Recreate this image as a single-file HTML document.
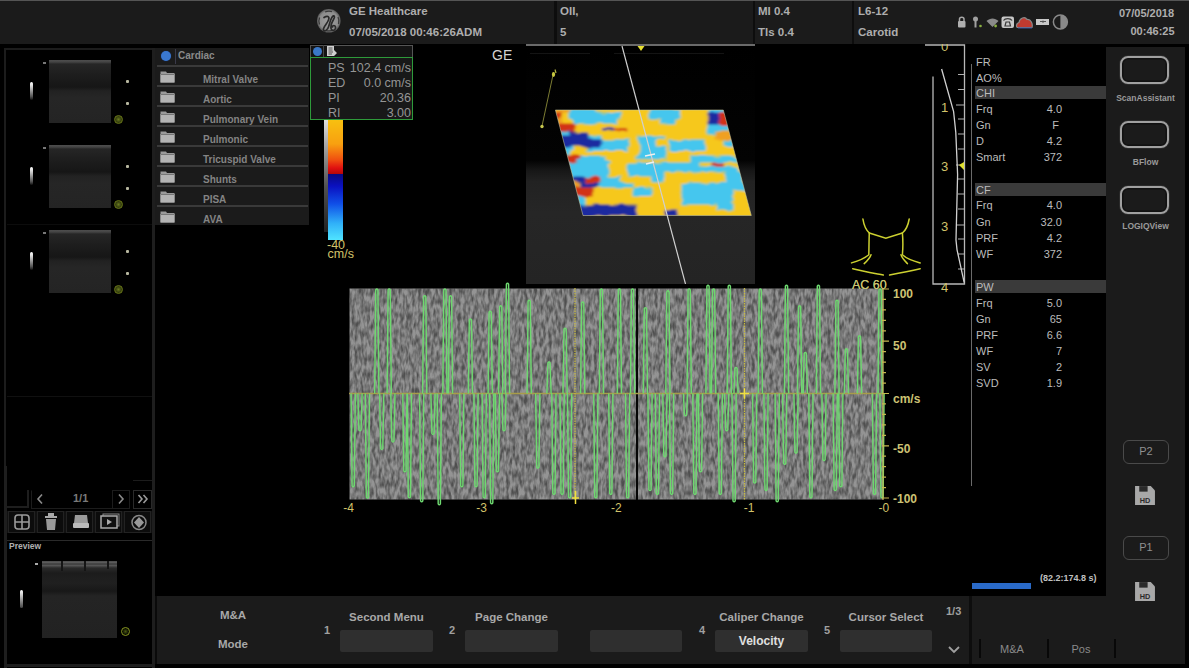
<!DOCTYPE html>
<html><head><meta charset="utf-8">
<style>
*{margin:0;padding:0;box-sizing:border-box}
html,body{width:1189px;height:668px;overflow:hidden;background:#000;font-family:"Liberation Sans",sans-serif}
.a{position:absolute}
.t{position:absolute;white-space:nowrap;line-height:1}
#top{left:0;top:0;width:1189px;height:43.5px;background:#1b1b1b;border-top:1px solid #555}
.tb{font-weight:bold;font-size:11.5px;color:#aeaeae}
.fold{font-weight:bold;font-size:10px;color:#848484}
.rowline{position:absolute;left:157px;width:151px;height:2px;background:#3a3a3a}
.prm{font-size:11px;color:#bcbcbc}
.hdr{position:absolute;left:975px;width:131px;height:13px;background:#3a3a3a}
.yl{color:#d2c36a}
.btnlbl{font-weight:bold;font-size:11.5px;color:#a8a8a8}
.sbtn{position:absolute;height:22.5px;width:93px;background:#2f2f2f;border-radius:2px}
.num{font-weight:bold;font-size:11px;color:#a0a0a0}
</style></head><body>


<!-- TOP BAR -->
<div id="top" class="a"></div>
<div class="a" style="left:554px;top:1px;width:3px;height:43px;background:#0d0d0d"></div>
<div class="a" style="left:753px;top:1px;width:2px;height:43px;background:#0d0d0d"></div>
<div class="a" style="left:852px;top:1px;width:2px;height:43px;background:#0d0d0d"></div>
<div class="a" style="left:526px;top:44px;width:229px;height:2px;background:#6a6a6a"></div>
<!-- GE logo -->
<svg class="a" style="left:312px;top:4px" width="34" height="34" viewBox="0 0 34 34">
 <defs><radialGradient id="gel" cx="50%" cy="50%" r="50%"><stop offset="0" stop-color="#a0a0a0"/><stop offset="0.8" stop-color="#8c8c8c"/><stop offset="1" stop-color="#5a5a5a"/></radialGradient></defs>
 <circle cx="16.8" cy="16.8" r="11.8" fill="url(#gel)"/>
 <path d="M13 8 A9.5 9.5 0 0 1 20 7.6 M26 13 A9.5 9.5 0 0 1 26.5 20 M21 26 A9.5 9.5 0 0 1 14 26.3 M7.5 20.5 A9.5 9.5 0 0 1 7.6 13.5" fill="none" stroke="#3a3a3a" stroke-width="1.3"/>
 <path d="M12 13.5 C15 11.5 18 12 16.5 16 C15 20 10.5 23.5 11.5 26 C12.5 28 15.5 26 16.5 23 C17.5 20 18.5 15 20.5 12.5 C22 11 23.5 12 21.5 15.5 C19.5 19 18 23 19.5 25.5 C21 27.5 24 26 23.5 23 C23 21 20.5 21 20.5 23" fill="none" stroke="#2a2a2a" stroke-width="1.7" stroke-linecap="round"/>
</svg>
<div class="t tb" style="left:349px;top:6px">GE Healthcare</div>
<div class="t tb" style="left:349px;top:27px">07/05/2018 00:46:26ADM</div>
<div class="t tb" style="left:560px;top:6px">OII,</div>
<div class="t tb" style="left:560px;top:27px">5</div>
<div class="t tb" style="left:758px;top:6px">MI 0.4</div>
<div class="t tb" style="left:758px;top:27px">Tls 0.4</div>
<div class="t tb" style="left:858px;top:6px">L6-12</div>
<div class="t tb" style="left:858px;top:27px">Carotid</div>
<svg class="a" style="left:955px;top:12px" width="118" height="20" viewBox="955 12 118 20">
 <path d="M959.5 21.5V19C959.5 16.5 964 16.5 964 19V21.5" fill="none" stroke="#a8a8a8" stroke-width="1.5"/>
 <rect x="958" y="21" width="7.5" height="6.5" rx="1" fill="#b0b0b0"/>
 <circle cx="975.5" cy="19" r="2.5" fill="#a0a0a0"/><rect x="974.5" y="20" width="2" height="7.5" fill="#a0a0a0"/>
 <circle cx="980.5" cy="26" r="1.3" fill="#8ab040"/>
 <path d="M986.5 21 C990 17.5 995 17.5 998.5 21 L992.5 27 Z" fill="#8a8a8a"/>
 <circle cx="995.6" cy="26" r="1.4" fill="#8ab040"/>
 <rect x="1001.5" y="16.5" width="12.5" height="11.5" rx="2" fill="#c8c8c8"/>
 <path d="M1003.5 20.5 C1005 18 1010.5 18 1012 20.5 M1005 26 L1006 22 H1009.5 L1010.5 26 Z" fill="none" stroke="#3a3a3a" stroke-width="1.2"/>
 <path d="M1017.5 27.5 C1016 27.5 1016 23 1019 22.5 C1019.5 18 1025 16 1027 19.5 C1031 19 1033 24 1032 27.5 Z" fill="#c03a30" stroke="#8a8a8a" stroke-width="1.2"/>
 <path d="M1018 28H1032" stroke="#3a50a0" stroke-width="1"/>
 <path d="M1036 19H1049V25H1036Z" fill="#c8c8c8"/><path d="M1040 21.5H1046M1043 20.5V23" stroke="#555" stroke-width="1"/>
 <circle cx="1060.4" cy="22" r="7" fill="none" stroke="#8a8a8a" stroke-width="1.5"/>
 <path d="M1060.4 15 A7 7 0 0 1 1060.4 29 Z" fill="#8a8a8a"/>
</svg>
<div class="t tb" style="left:1119px;top:8px;font-size:11px">07/05/2018</div>
<div class="t tb" style="left:1130.5px;top:26px;font-size:11px">00:46:25</div>

<!-- LEFT PANEL -->
<div class="a" style="left:4px;top:48px;width:151px;height:418px;border:2px solid #1c1c1c;border-right:none;border-bottom:none"></div>
<div class="a" style="left:152px;top:48px;width:3px;height:620px;background:#1e1e1e"></div>
<div class="a" style="left:7px;top:224px;width:145px;height:1px;background:#0c0c0c"></div>
<div class="a" style="left:7px;top:396px;width:145px;height:1px;background:#101010"></div>
<div class="a" style="left:49px;top:60px;width:62px;height:63px;background:linear-gradient(#4e4e4e 0,#444 2px,#262626 4px,#1e1e1e 14px,#161616 27px,#222 31px,#262626 60%,#242424 100%)"></div>
<div class="a" style="left:29.5px;top:82px;width:3.5px;height:18px;border-radius:2px;background:linear-gradient(#fff 0,#ddd 20%,#555 80%,#111)"></div>
<div class="a" style="left:43px;top:62px;width:3px;height:2px;background:#777"></div>
<div class="a" style="left:126px;top:80px;width:2.5px;height:2.5px;border-radius:1px;background:#b8b8a0"></div>
<div class="a" style="left:126px;top:102px;width:2.5px;height:2.5px;border-radius:1px;background:#b8b8a0"></div>
<div class="a" style="left:113.5px;top:114.5px;width:9px;height:9px;border-radius:50%;border:1.3px solid #6a7818;background:radial-gradient(#6a7a20 0,#3a4410 50%,#222a08 100%)"></div>
<div class="a" style="left:49px;top:145px;width:62px;height:63px;background:linear-gradient(#4e4e4e 0,#444 2px,#262626 4px,#1e1e1e 14px,#161616 27px,#222 31px,#262626 60%,#242424 100%)"></div>
<div class="a" style="left:29.5px;top:167px;width:3.5px;height:18px;border-radius:2px;background:linear-gradient(#fff 0,#ddd 20%,#555 80%,#111)"></div>
<div class="a" style="left:43px;top:147px;width:3px;height:2px;background:#777"></div>
<div class="a" style="left:126px;top:165px;width:2.5px;height:2.5px;border-radius:1px;background:#b8b8a0"></div>
<div class="a" style="left:126px;top:187px;width:2.5px;height:2.5px;border-radius:1px;background:#b8b8a0"></div>
<div class="a" style="left:113.5px;top:199.5px;width:9px;height:9px;border-radius:50%;border:1.3px solid #6a7818;background:radial-gradient(#6a7a20 0,#3a4410 50%,#222a08 100%)"></div>
<div class="a" style="left:49px;top:230px;width:62px;height:63px;background:linear-gradient(#4e4e4e 0,#444 2px,#262626 4px,#1e1e1e 14px,#161616 27px,#222 31px,#262626 60%,#242424 100%)"></div>
<div class="a" style="left:29.5px;top:252px;width:3.5px;height:18px;border-radius:2px;background:linear-gradient(#fff 0,#ddd 20%,#555 80%,#111)"></div>
<div class="a" style="left:43px;top:232px;width:3px;height:2px;background:#777"></div>
<div class="a" style="left:126px;top:250px;width:2.5px;height:2.5px;border-radius:1px;background:#b8b8a0"></div>
<div class="a" style="left:126px;top:272px;width:2.5px;height:2.5px;border-radius:1px;background:#b8b8a0"></div>
<div class="a" style="left:113.5px;top:284.5px;width:9px;height:9px;border-radius:50%;border:1.3px solid #6a7818;background:radial-gradient(#6a7a20 0,#3a4410 50%,#222a08 100%)"></div>

<!-- nav row -->
<div class="a" style="left:7px;top:490px;width:22px;height:18px;border-right:2px solid #1e1e1e;border-bottom:2px solid #1e1e1e"></div>
<div class="a" style="left:31px;top:490px;width:99px;height:19px;border:1.5px solid #1c1c1c;border-top-color:#000"></div>
<svg class="a" style="left:35px;top:492px" width="10" height="14"><path d="M7 2.5L3 7L7 11.5" fill="none" stroke="#8a8a8a" stroke-width="1.6"/></svg>
<div class="t" style="left:73px;top:493px;font-size:11px;color:#7a7a7a;font-weight:bold">1/1</div>
<div class="a" style="left:112px;top:490px;width:18px;height:19px;border:1.5px solid #1c1c1c"></div>
<svg class="a" style="left:116px;top:492px" width="10" height="14"><path d="M3 2.5L7 7L3 11.5" fill="none" stroke="#8a8a8a" stroke-width="1.6"/></svg>
<div class="a" style="left:133px;top:490px;width:19px;height:19px;border:1.5px solid #2a2a2a"></div>
<svg class="a" style="left:136px;top:492px" width="14" height="14"><path d="M2.5 3L6 7L2.5 11M7.5 3L11 7L7.5 11" fill="none" stroke="#9a9a9a" stroke-width="1.6"/></svg>
<div class="a" style="left:133px;top:480px;width:19px;height:1px;background:#1c1c1c"></div>
<!-- icon row -->
<div class="a" style="left:7px;top:511px;width:145px;height:22px;background:#111"></div>
<div class="a" style="left:8px;top:511px;width:27px;height:22px;border:1px solid #222;background:#0c0c0c"></div>
<div class="a" style="left:37px;top:511px;width:27px;height:22px;border:1px solid #222;background:#0c0c0c"></div>
<div class="a" style="left:66px;top:511px;width:27px;height:22px;border:1px solid #222;background:#0c0c0c"></div>
<div class="a" style="left:95px;top:511px;width:27px;height:22px;border:1px solid #222;background:#0c0c0c"></div>
<div class="a" style="left:124px;top:511px;width:27px;height:22px;border:1px solid #222;background:#0c0c0c"></div>

<svg class="a" style="left:13px;top:514px" width="18" height="16"><rect x="2" y="1" width="14" height="14" rx="3" fill="none" stroke="#9a9a9a" stroke-width="1.6"/><path d="M9 1V15M2 8H16" stroke="#9a9a9a" stroke-width="1.6"/></svg>
<svg class="a" style="left:44px;top:513px" width="14" height="18"><rect x="4" y="0" width="6" height="3" fill="#aaa"/><rect x="1" y="3" width="12" height="2" fill="#aaa"/><path d="M2 6H12L11 17H3Z" fill="#9a9a9a"/></svg>
<svg class="a" style="left:72px;top:514px" width="18" height="16"><path d="M3 1H15L16 9H2Z" fill="#9a9a9a"/><rect x="1" y="9" width="16" height="5" rx="1" fill="#bbb"/></svg>
<svg class="a" style="left:100px;top:513px" width="20" height="17"><rect x="3" y="1" width="16" height="12" fill="none" stroke="#888" stroke-width="1"/><rect x="1" y="3" width="16" height="12" fill="#111" stroke="#aaa" stroke-width="1.5"/><path d="M7 6L12 9L7 12Z" fill="#aaa"/></svg>
<svg class="a" style="left:130px;top:514px" width="18" height="17"><circle cx="9" cy="8.5" r="7" fill="none" stroke="#888" stroke-width="1.5"/><path d="M9 3L14 8.5L9 14L4 8.5Z" fill="#999"/></svg>
<div class="a" style="left:7px;top:540px;width:145px;height:1px;background:#2a2a2a"></div>
<div class="t" style="left:9px;top:542px;font-size:8.5px;font-weight:bold;color:#b0b0b0">Preview</div>
<!-- preview image -->
<div class="a" style="left:42px;top:561px;width:75px;height:77px;background:linear-gradient(#4a4a4a 0,#5a5a5a 1.5px,#3a3a3a 3px,#555 4.5px,#2a2a2a 7px,#1c1c1c 12px,#202020 22px,#181818 30px,#242424 35px,#222 100%)"></div>
<div class="a" style="left:61px;top:561px;width:2px;height:10px;background:#151515"></div>
<div class="a" style="left:84px;top:561px;width:2px;height:10px;background:#151515"></div>
<div class="a" style="left:107px;top:561px;width:2px;height:8px;background:#151515"></div>
<div class="a" style="left:20px;top:590px;width:3px;height:18px;border-radius:2px;background:linear-gradient(#fff,#444)"></div>
<div class="a" style="left:35px;top:563px;width:3px;height:2px;background:#aaa"></div>
<div class="a" style="left:121px;top:627px;width:9px;height:9px;border-radius:50%;border:1.2px solid #8a9a20;background:radial-gradient(#4a5a10,transparent 70%)"></div>
<div class="a" style="left:4px;top:466px;width:3px;height:202px;background:#1e1e1e"></div>
<div class="a" style="left:4px;top:664px;width:151px;height:3px;background:#1e1e1e"></div>

<!-- FOLDER LIST -->
<div class="a" style="left:155px;top:48px;width:154px;height:177px;background:#1b1b1b"></div>
<div class="a" style="left:161px;top:51px;width:10px;height:10px;border-radius:50%;background:#3a78d0;box-shadow:0 0 1px #1a3a80"></div>
<div class="a" style="left:175px;top:49px;width:1px;height:15px;background:#3a3a4a"></div>
<div class="t" style="left:178px;top:51px;font-size:10px;font-weight:bold;color:#8a8a8a">Cardiac</div>
<div class="rowline" style="top:65px"></div>
<svg class="a" style="left:160px;top:70px" width="15" height="13"><path d="M0.5 1.5H6L7 3H14.5V12.5H0.5Z" fill="#9a9a9a"/><rect x="0.5" y="4" width="14" height="8.5" fill="#b4b4b4"/><path d="M1 4.5H14" stroke="#777" stroke-width="1"/></svg>
<div class="t fold" style="left:203px;top:75px">Mitral Valve</div>
<div class="rowline" style="top:85px"></div>
<svg class="a" style="left:160px;top:90px" width="15" height="13"><path d="M0.5 1.5H6L7 3H14.5V12.5H0.5Z" fill="#9a9a9a"/><rect x="0.5" y="4" width="14" height="8.5" fill="#b4b4b4"/><path d="M1 4.5H14" stroke="#777" stroke-width="1"/></svg>
<div class="t fold" style="left:203px;top:95px">Aortic</div>
<div class="rowline" style="top:105px"></div>
<svg class="a" style="left:160px;top:110px" width="15" height="13"><path d="M0.5 1.5H6L7 3H14.5V12.5H0.5Z" fill="#9a9a9a"/><rect x="0.5" y="4" width="14" height="8.5" fill="#b4b4b4"/><path d="M1 4.5H14" stroke="#777" stroke-width="1"/></svg>
<div class="t fold" style="left:203px;top:115px">Pulmonary Vein</div>
<div class="rowline" style="top:125px"></div>
<svg class="a" style="left:160px;top:130px" width="15" height="13"><path d="M0.5 1.5H6L7 3H14.5V12.5H0.5Z" fill="#9a9a9a"/><rect x="0.5" y="4" width="14" height="8.5" fill="#b4b4b4"/><path d="M1 4.5H14" stroke="#777" stroke-width="1"/></svg>
<div class="t fold" style="left:203px;top:135px">Pulmonic</div>
<div class="rowline" style="top:145px"></div>
<svg class="a" style="left:160px;top:150px" width="15" height="13"><path d="M0.5 1.5H6L7 3H14.5V12.5H0.5Z" fill="#9a9a9a"/><rect x="0.5" y="4" width="14" height="8.5" fill="#b4b4b4"/><path d="M1 4.5H14" stroke="#777" stroke-width="1"/></svg>
<div class="t fold" style="left:203px;top:155px">Tricuspid Valve</div>
<div class="rowline" style="top:165px"></div>
<svg class="a" style="left:160px;top:170px" width="15" height="13"><path d="M0.5 1.5H6L7 3H14.5V12.5H0.5Z" fill="#9a9a9a"/><rect x="0.5" y="4" width="14" height="8.5" fill="#b4b4b4"/><path d="M1 4.5H14" stroke="#777" stroke-width="1"/></svg>
<div class="t fold" style="left:203px;top:175px">Shunts</div>
<div class="rowline" style="top:185px"></div>
<svg class="a" style="left:160px;top:190px" width="15" height="13"><path d="M0.5 1.5H6L7 3H14.5V12.5H0.5Z" fill="#9a9a9a"/><rect x="0.5" y="4" width="14" height="8.5" fill="#b4b4b4"/><path d="M1 4.5H14" stroke="#777" stroke-width="1"/></svg>
<div class="t fold" style="left:203px;top:195px">PISA</div>
<div class="rowline" style="top:205px"></div>
<svg class="a" style="left:160px;top:210px" width="15" height="13"><path d="M0.5 1.5H6L7 3H14.5V12.5H0.5Z" fill="#9a9a9a"/><rect x="0.5" y="4" width="14" height="8.5" fill="#b4b4b4"/><path d="M1 4.5H14" stroke="#777" stroke-width="1"/></svg>
<div class="t fold" style="left:203px;top:215px">AVA</div>

<!-- PS BOX -->
<div class="a" style="left:310px;top:45px;width:103px;height:13px;border:1px solid #555;border-bottom:none;background:#141414"></div>
<div class="a" style="left:323px;top:45px;width:1px;height:12px;background:#444"></div>
<div class="a" style="left:313px;top:47px;width:9px;height:9px;border-radius:50%;background:#3a78c8"></div>
<svg class="a" style="left:326px;top:45px" width="12" height="12"><path d="M1 1H8V5L11 8L8 11H1Z" fill="#d0d0d0"/><path d="M2.5 3H6.5M2.5 5H6.5M2.5 7H7M2.5 9H6" stroke="#444" stroke-width="0.9"/></svg>
<div class="a" style="left:310px;top:57px;width:103px;height:63px;border:1.5px solid #2e9a3a;background:#181818"></div>
<div class="t" style="left:328px;top:61.5px;font-size:12.5px;color:#959595">PS</div>
<div class="t" style="left:340px;top:61.5px;width:71px;text-align:right;font-size:12.5px;color:#959595">102.4 cm/s</div>
<div class="t" style="left:328px;top:76.5px;font-size:12.5px;color:#959595">ED</div>
<div class="t" style="left:340px;top:76.5px;width:71px;text-align:right;font-size:12.5px;color:#959595">0.0 cm/s</div>
<div class="t" style="left:328px;top:91.5px;font-size:12.5px;color:#959595">PI</div>
<div class="t" style="left:340px;top:91.5px;width:71px;text-align:right;font-size:12.5px;color:#959595">20.36</div>
<div class="t" style="left:328px;top:106.5px;font-size:12.5px;color:#959595">RI</div>
<div class="t" style="left:340px;top:106.5px;width:71px;text-align:right;font-size:12.5px;color:#959595">3.00</div>

<!-- COLOR BAR -->
<div class="a" style="left:324px;top:120px;width:4px;height:112px;background:linear-gradient(#e0e0e0,#a0a0a0 25%,#505050 60%,#202020)"></div>
<div class="a" style="left:328px;top:120px;width:15px;height:120px;background:linear-gradient(#f8c010 0,#f8a010 20%,#f05010 33%,#e01010 40%,#b80808 44.6%,#0a0a80 45.2%,#0a10c0 55%,#1050e8 70%,#30b0f8 86%,#50e4ff 100%)"></div>
<div class="t yl" style="left:327px;top:239px;font-size:12.5px">-40</div>
<div class="t yl" style="left:327.5px;top:248px;font-size:12.5px">cm/s</div>

<!-- BMODE -->
<div class="a" style="left:526px;top:46px;width:229px;height:238px;background:linear-gradient(#000 0,#030303 48%,#161616 52%,#222 57%,#262626 70%,#242424 100%)"></div>
<div class="a" style="left:530px;top:53px;width:60px;height:1px;background:#141414"></div>
<div class="a" style="left:614px;top:53px;width:110px;height:1px;background:#141414"></div>
<svg class="a" style="left:526px;top:46px" width="229" height="238">
 <defs>
  <filter id="bl" x="-10%" y="-10%" width="120%" height="120%"><feTurbulence type="fractalNoise" baseFrequency="0.09 0.12" numOctaves="2" seed="5" result="t"/><feDisplacementMap in="SourceGraphic" in2="t" scale="6" xChannelSelector="R" yChannelSelector="G" result="d"/><feGaussianBlur in="d" stdDeviation="1.8 1.2"/></filter>
  <clipPath id="cp"><path d="M29.4 64 L197.3 64 L225.3 169.5 L57.0 169.5 Z"/></clipPath>
 </defs>
 <g clip-path="url(#cp)"><g filter="url(#bl)"><rect x="0" y="0" width="229" height="238" fill="#f6c81a"/><rect x="23.5" y="62.5" width="21" height="5" fill="#f0a020"/><rect x="43.5" y="62.5" width="27" height="5" fill="#44c6ee"/><rect x="69.5" y="62.5" width="57" height="5" fill="#f6c81a"/><rect x="123.5" y="62.5" width="31" height="5" fill="#44c6ee"/><rect x="153.5" y="62.5" width="29" height="5" fill="#f6c81a"/><rect x="181.5" y="62.5" width="23" height="5" fill="#44c6ee"/><rect x="23.5" y="66.5" width="14" height="7" fill="#d23018"/><rect x="36.5" y="66.5" width="8" height="7" fill="#f6c81a"/><rect x="43.5" y="66.5" width="53" height="7" fill="#44c6ee"/><rect x="95.5" y="66.5" width="29" height="7" fill="#f6c81a"/><rect x="123.5" y="66.5" width="31" height="7" fill="#44c6ee"/><rect x="153.5" y="66.5" width="28" height="7" fill="#f6c81a"/><rect x="180.5" y="66.5" width="14" height="7" fill="#1a2aa0"/><rect x="193.5" y="66.5" width="11" height="7" fill="#d23018"/><rect x="23.5" y="72.5" width="14" height="7" fill="#f0a020"/><rect x="36.5" y="72.5" width="10" height="7" fill="#f6c81a"/><rect x="47.5" y="72.5" width="45" height="7" fill="#44c6ee"/><rect x="91.5" y="72.5" width="44" height="7" fill="#f6c81a"/><rect x="134.5" y="72.5" width="16" height="7" fill="#44c6ee"/><rect x="149.5" y="72.5" width="33" height="7" fill="#f6c81a"/><rect x="181.5" y="72.5" width="13" height="7" fill="#1a2aa0"/><rect x="193.5" y="72.5" width="11" height="7" fill="#d23018"/><rect x="23.5" y="78.5" width="27" height="8" fill="#d23018"/><rect x="49.5" y="78.5" width="27" height="8" fill="#f6c81a"/><rect x="75.5" y="78.5" width="26" height="8" fill="#f6c81a"/><rect x="100.5" y="78.5" width="82" height="8" fill="#f6c81a"/><rect x="181.5" y="78.5" width="23" height="8" fill="#44c6ee"/><rect x="23.5" y="85.5" width="21" height="5" fill="#44c6ee"/><rect x="43.5" y="85.5" width="20" height="5" fill="#1a2aa0"/><rect x="62.5" y="85.5" width="121" height="5" fill="#f6c81a"/><rect x="182.5" y="85.5" width="8" height="5" fill="#44c6ee"/><rect x="189.5" y="85.5" width="20" height="5" fill="#f0a020"/><rect x="23.5" y="89.5" width="40" height="5" fill="#1a2aa0"/><rect x="62.5" y="89.5" width="14" height="5" fill="#44c6ee"/><rect x="75.5" y="89.5" width="37" height="5" fill="#f6c81a"/><rect x="111.5" y="89.5" width="29" height="5" fill="#44c6ee"/><rect x="139.5" y="89.5" width="51" height="5" fill="#f6c81a"/><rect x="189.5" y="89.5" width="20" height="5" fill="#f0a020"/><rect x="23.5" y="93.5" width="52" height="8" fill="#1a2aa0"/><rect x="74.5" y="93.5" width="31" height="8" fill="#44c6ee"/><rect x="104.5" y="93.5" width="10" height="8" fill="#f6c81a"/><rect x="113.5" y="93.5" width="17" height="8" fill="#44c6ee"/><rect x="129.5" y="93.5" width="15" height="8" fill="#f6c81a"/><rect x="143.5" y="93.5" width="37" height="8" fill="#44c6ee"/><rect x="179.5" y="93.5" width="20" height="8" fill="#f6c81a"/><rect x="198.5" y="93.5" width="10" height="8" fill="#44c6ee"/><rect x="207.5" y="93.5" width="17" height="8" fill="#f6c81a"/><rect x="23.5" y="100.5" width="25" height="5.5" fill="#44c6ee"/><rect x="47.5" y="100.5" width="14" height="5.5" fill="#f6c81a"/><rect x="60.5" y="100.5" width="41" height="5.5" fill="#44c6ee"/><rect x="100.5" y="100.5" width="14" height="5.5" fill="#f6c81a"/><rect x="113.5" y="100.5" width="28" height="5.5" fill="#44c6ee"/><rect x="140.5" y="100.5" width="4" height="5.5" fill="#f6c81a"/><rect x="143.5" y="100.5" width="37" height="5.5" fill="#44c6ee"/><rect x="179.5" y="100.5" width="45" height="5.5" fill="#f6c81a"/><rect x="23.5" y="105.0" width="21" height="5.5" fill="#44c6ee"/><rect x="43.5" y="105.0" width="71" height="5.5" fill="#f6c81a"/><rect x="113.5" y="105.0" width="28" height="5.5" fill="#44c6ee"/><rect x="140.5" y="105.0" width="84" height="5.5" fill="#f6c81a"/><rect x="23.5" y="109.5" width="32" height="5" fill="#d23018"/><rect x="54.5" y="109.5" width="25" height="5" fill="#44c6ee"/><rect x="78.5" y="109.5" width="33" height="5" fill="#f6c81a"/><rect x="110.5" y="109.5" width="30" height="5" fill="#44c6ee"/><rect x="139.5" y="109.5" width="27" height="5" fill="#f6c81a"/><rect x="165.5" y="109.5" width="45" height="5" fill="#44c6ee"/><rect x="209.5" y="109.5" width="15" height="5" fill="#f6c81a"/><rect x="23.5" y="113.5" width="28" height="4" fill="#d23018"/><rect x="50.5" y="113.5" width="36" height="4" fill="#44c6ee"/><rect x="85.5" y="113.5" width="80" height="4" fill="#f6c81a"/><rect x="164.5" y="113.5" width="50" height="4" fill="#44c6ee"/><rect x="23.5" y="116.5" width="60" height="5" fill="#44c6ee"/><rect x="82.5" y="116.5" width="20" height="5" fill="#f6c81a"/><rect x="101.5" y="116.5" width="73" height="5" fill="#44c6ee"/><rect x="173.5" y="116.5" width="13" height="5" fill="#f6c81a"/><rect x="185.5" y="116.5" width="13" height="5" fill="#d23018"/><rect x="197.5" y="116.5" width="27" height="5" fill="#f6c81a"/><rect x="23.5" y="120.5" width="60" height="6" fill="#44c6ee"/><rect x="82.5" y="120.5" width="20" height="6" fill="#f6c81a"/><rect x="101.5" y="120.5" width="112" height="6" fill="#44c6ee"/><rect x="212.5" y="120.5" width="17" height="6" fill="#f6c81a"/><rect x="23.5" y="125.5" width="60" height="6" fill="#44c6ee"/><rect x="82.5" y="125.5" width="20" height="6" fill="#f6c81a"/><rect x="101.5" y="125.5" width="37" height="6" fill="#44c6ee"/><rect x="137.5" y="125.5" width="63" height="6" fill="#f6c81a"/><rect x="199.5" y="125.5" width="19" height="6" fill="#44c6ee"/><rect x="217.5" y="125.5" width="12" height="6" fill="#f6c81a"/><rect x="23.5" y="130.5" width="36" height="7" fill="#1a2aa0"/><rect x="58.5" y="130.5" width="16" height="7" fill="#d23018"/><rect x="73.5" y="130.5" width="22" height="7" fill="#44c6ee"/><rect x="94.5" y="130.5" width="32" height="7" fill="#f6c81a"/><rect x="125.5" y="130.5" width="13" height="7" fill="#44c6ee"/><rect x="137.5" y="130.5" width="63" height="7" fill="#f6c81a"/><rect x="199.5" y="130.5" width="19" height="7" fill="#44c6ee"/><rect x="217.5" y="130.5" width="12" height="7" fill="#f6c81a"/><rect x="23.5" y="136.5" width="32" height="6" fill="#f0a020"/><rect x="54.5" y="136.5" width="19" height="6" fill="#1a2aa0"/><rect x="72.5" y="136.5" width="36" height="6" fill="#44c6ee"/><rect x="107.5" y="136.5" width="49" height="6" fill="#f6c81a"/><rect x="155.5" y="136.5" width="74" height="6" fill="#44c6ee"/><rect x="23.5" y="141.5" width="44" height="5" fill="#d23018"/><rect x="66.5" y="141.5" width="42" height="5" fill="#f6c81a"/><rect x="107.5" y="141.5" width="19" height="5" fill="#44c6ee"/><rect x="125.5" y="141.5" width="31" height="5" fill="#f6c81a"/><rect x="155.5" y="141.5" width="74" height="5" fill="#44c6ee"/><rect x="23.5" y="145.5" width="44" height="6" fill="#d23018"/><rect x="66.5" y="145.5" width="42" height="6" fill="#f6c81a"/><rect x="107.5" y="145.5" width="19" height="6" fill="#44c6ee"/><rect x="125.5" y="145.5" width="31" height="6" fill="#f6c81a"/><rect x="155.5" y="145.5" width="52" height="6" fill="#44c6ee"/><rect x="206.5" y="145.5" width="23" height="6" fill="#f6c81a"/><rect x="23.5" y="150.5" width="37" height="9" fill="#44c6ee"/><rect x="59.5" y="150.5" width="97" height="9" fill="#f6c81a"/><rect x="155.5" y="150.5" width="52" height="9" fill="#44c6ee"/><rect x="206.5" y="150.5" width="23" height="9" fill="#f6c81a"/><rect x="23.5" y="158.5" width="88" height="6" fill="#1a2aa0"/><rect x="110.5" y="158.5" width="81" height="6" fill="#f6c81a"/><rect x="190.5" y="158.5" width="19" height="6" fill="#44c6ee"/><rect x="208.5" y="158.5" width="21" height="6" fill="#f6c81a"/><rect x="23.5" y="163.5" width="88" height="7" fill="#1a2aa0"/><rect x="110.5" y="163.5" width="29" height="7" fill="#f6c81a"/><rect x="138.5" y="163.5" width="14" height="7" fill="#1a2aa0"/><rect x="151.5" y="163.5" width="78" height="7" fill="#f6c81a"/><rect x="76" y="82" width="12" height="2.5" fill="#1a2aa0"/><rect x="88" y="82" width="13" height="2.5" fill="#d23018"/><rect x="186" y="118" width="12" height="2.5" fill="#d23018"/></g></g>
 <path d="M29.4 64 L197.3 64 L225.3 169.5 L57.0 169.5 Z" fill="none" stroke="#c8c8a0" stroke-width="1" opacity="0.55"/>
 <path d="M27.0 29.0 L16.0 80.0" stroke="#8a8a38" stroke-width="0.9"/>
 <ellipse cx="27.5" cy="28.5" rx="1.6" ry="2.4" fill="#c8c840"/>
 <path d="M29.0 23.5 L30.0 27.0" stroke="#b0b040" stroke-width="1.2"/>
 <circle cx="16" cy="80.5" r="1.7" fill="#c8c850"/>
 <path d="M96.0 0.0 L159.5 238.0" stroke="#d0d0d0" stroke-width="1.2"/>
 <path d="M111.5 0.0 L118.5 0.0 L115.0 5.0 Z" fill="#e8e030"/>
 <path d="M119.0 110.0 L129.0 108.0 M120.0 118.0 L128.0 116.0" stroke="#f0f0f0" stroke-width="1.3"/>
</svg>
<div class="t" style="left:492px;top:48px;font-size:14px;color:#d4d4d4">GE</div>

<!-- DOPPLER -->
<svg class="a" style="left:349px;top:282px;overflow:visible" width="540" height="220" viewBox="0 -6 540 220">
 <defs>
  <filter id="noise" x="0" y="0" width="100%" height="100%">
   <feTurbulence type="fractalNoise" baseFrequency="0.33 0.12" numOctaves="2" seed="7" result="n"/>
   <feColorMatrix type="matrix" values="0 0 0 0 0  0 0 0 0 0  0 0 0 0 0  0 0 0 -2.2 1.5" in="n" result="a"/>
   <feFlood flood-color="#262626" result="f"/>
   <feComposite in="f" in2="a" operator="in" result="c"/>
   <feGaussianBlur in="c" stdDeviation="0.6"/>
  </filter>
 </defs>
 <rect x="0.5" y="0.5" width="534" height="211" fill="#949494"/>
 <rect x="0.5" y="0.5" width="534" height="211" filter="url(#noise)" opacity="0.62"/>
 <rect x="287" y="0" width="2" height="212" fill="#050505"/>
 <path d="M0 105.5H534" stroke="#a89c48" stroke-width="1.5"/>
 <path d="M25.7 105.5L26.7 1.9Q27.8 -0.1 28.9 1.9L29.9 105.5M38.1 105.5L39.1 1.9Q40.2 -0.1 41.3 1.9L42.3 105.5M73.6 105.5L74.6 8.7Q75.7 6.7 76.8 8.7L77.8 105.5M93.8 105.5L94.8 1.9Q95.9 -0.1 97.0 1.9L98.0 105.5M99.4 105.5L100.4 8.7Q101.5 6.7 102.6 8.7L103.6 105.5M119.3 105.5L120.3 31.9Q121.4 29.9 122.5 31.9L123.5 105.5M139.1 105.5L140.1 24.2Q141.2 22.2 142.3 24.2L143.3 105.5M149.6 105.5L150.6 18.8Q151.7 16.8 152.8 18.8L153.8 105.5M156.4 105.5L157.4 -3.8Q158.5 -5.8 159.6 -3.8L160.6 105.5M178.1 105.5L179.1 13.2Q180.2 11.2 181.3 13.2L182.3 105.5M197.9 105.5L198.9 74.9Q200.0 72.9 201.1 74.9L202.1 105.5M214.0 105.5L215.0 41.2Q216.1 39.2 217.2 41.2L218.2 105.5M231.6 105.5L232.6 15.0Q233.7 13.0 234.8 15.0L235.8 105.5M250.3 105.5L251.3 1.9Q252.4 -0.1 253.5 1.9L254.5 105.5M268.3 105.5L269.3 1.9Q270.4 -0.1 271.5 1.9L272.5 105.5M281.4 105.5L282.4 1.9Q283.5 -0.1 284.6 1.9L285.6 105.5M294.3 105.5L295.3 20.6Q296.4 18.6 297.5 20.6L298.5 105.5M316.8 105.5L317.8 3.8Q318.9 1.8 320.0 3.8L321.0 105.5M338.1 105.5L339.1 1.9Q340.2 -0.1 341.3 1.9L342.3 105.5M356.9 105.5L357.9 -1.8Q359.0 -3.8 360.1 -1.8L361.1 105.5M362.5 105.5L363.5 1.9Q364.6 -0.1 365.7 1.9L366.7 105.5M378.2 105.5L379.2 -1.8Q380.3 -3.8 381.4 -1.8L382.4 105.5M384.9 105.5L385.9 80.5Q387.0 78.5 388.1 80.5L389.1 105.5M409.2 105.5L410.2 1.9Q411.3 -0.1 412.4 1.9L413.4 105.5M435.4 105.5L436.4 -1.8Q437.5 -3.8 438.6 -1.8L439.6 105.5M448.5 105.5L449.5 18.8Q450.6 16.8 451.7 18.8L452.7 105.5M454.2 105.5L455.2 65.5Q456.3 63.5 457.4 65.5L458.4 105.5M467.3 105.5L468.3 -1.8Q469.4 -3.8 470.5 -1.8L471.5 105.5M485.9 105.5L486.9 13.2Q488.0 11.2 489.1 13.2L490.1 105.5M495.3 105.5L496.3 61.8Q497.4 59.8 498.5 61.8L499.5 105.5M508.4 105.5L509.4 48.7Q510.5 46.7 511.6 48.7L512.6 105.5M529.0 105.5L530.0 1.9Q531.1 -0.1 532.2 1.9L533.2 105.5M2.1 105.5L3.1 197.8Q4.2 199.8 5.3 197.8L6.3 105.5M8.9 105.5L9.9 141.8Q11.0 143.8 12.1 141.8L13.1 105.5M16.3 105.5L17.3 209.2Q18.4 211.2 19.5 209.2L20.5 105.5M30.6 105.5L31.6 160.5Q32.7 162.5 33.8 160.5L34.8 105.5M41.8 105.5L42.8 153.0Q43.9 155.0 45.0 153.0L46.0 105.5M53.8 105.5L54.8 182.8Q55.9 184.8 57.0 182.8L58.0 105.5M58.3 105.5L59.3 208.8Q60.4 210.8 61.5 208.8L62.5 105.5M70.6 105.5L71.6 212.8Q72.7 214.8 73.8 212.8L74.8 105.5M81.9 105.5L82.9 145.5Q84.0 147.5 85.1 145.5L86.1 105.5M88.2 105.5L89.2 215.8Q90.3 217.8 91.4 215.8L92.4 105.5M110.7 105.5L111.7 197.8Q112.8 199.8 113.9 197.8L114.9 105.5M124.9 105.5L125.9 197.8Q127.0 199.8 128.1 197.8L129.1 105.5M133.1 105.5L134.1 208.8Q135.2 210.8 136.3 208.8L137.3 105.5M140.6 105.5L141.6 214.8Q142.7 216.8 143.8 214.8L144.8 105.5M146.3 105.5L147.3 182.8Q148.4 184.8 149.5 182.8L150.5 105.5M152.9 105.5L153.9 141.8Q155.0 143.8 156.1 141.8L157.1 105.5M186.7 105.5L187.7 179.2Q188.8 181.2 189.9 179.2L190.9 105.5M202.8 105.5L203.8 205.4Q204.9 207.4 206.0 205.4L207.0 105.5M211.0 105.5L212.0 205.4Q213.1 207.4 214.2 205.4L215.2 105.5M218.5 105.5L219.5 208.8Q220.6 210.8 221.7 208.8L222.7 105.5M244.7 105.5L245.7 208.8Q246.8 210.8 247.9 208.8L248.9 105.5M259.7 105.5L260.7 205.4Q261.8 207.4 262.9 205.4L263.9 105.5M276.5 105.5L277.5 208.8Q278.6 210.8 279.7 208.8L280.7 105.5M298.9 105.5L299.9 201.6Q301.0 203.6 302.1 201.6L303.1 105.5M306.3 105.5L307.3 205.4Q308.4 207.4 309.5 205.4L310.5 105.5M313.8 105.5L314.8 167.8Q315.9 169.8 317.0 167.8L318.0 105.5M320.5 105.5L321.5 205.4Q322.6 207.4 323.7 205.4L324.7 105.5M334.4 105.5L335.4 126.8Q336.5 128.8 337.6 126.8L338.6 105.5M343.8 105.5L344.8 205.4Q345.9 207.4 347.0 205.4L348.0 105.5M349.4 105.5L350.4 182.8Q351.5 184.8 352.6 182.8L353.6 105.5M369.2 105.5L370.2 205.4Q371.3 207.4 372.4 205.4L373.4 105.5M375.6 105.5L376.6 141.8Q377.7 143.8 378.8 141.8L379.8 105.5M383.0 105.5L384.0 212.8Q385.1 214.8 386.2 212.8L387.2 105.5M403.6 105.5L404.6 194.1Q405.7 196.1 406.8 194.1L407.8 105.5M414.9 105.5L415.9 201.6Q417.0 203.6 418.1 201.6L419.1 105.5M426.1 105.5L427.1 212.8Q428.2 214.8 429.3 212.8L430.3 105.5M433.6 105.5L434.6 175.4Q435.7 177.4 436.8 175.4L437.8 105.5M444.9 105.5L445.9 164.2Q447.0 166.2 448.1 164.2L449.1 105.5M459.8 105.5L460.8 208.8Q461.9 210.8 463.0 208.8L464.0 105.5M472.9 105.5L473.9 171.7Q475.0 173.7 476.1 171.7L477.1 105.5M484.1 105.5L485.1 201.6Q486.2 203.6 487.3 201.6L488.3 105.5M489.7 105.5L490.7 197.8Q491.8 199.8 492.9 197.8L493.9 105.5M523.4 105.5L524.4 205.4Q525.5 207.4 526.6 205.4L527.6 105.5M530.9 105.5L531.9 208.8Q533.0 210.8 534.1 208.8L535.1 105.5" fill="none" stroke="#6ed870" stroke-width="1.45" stroke-linejoin="round"/>
 <path d="M226 0V212M395.5 0V212" stroke="#c8bc40" stroke-width="1.2" stroke-dasharray="1.5 1"/>
 <path d="M391 105.5H400M395.5 100.5V110.5" stroke="#f0e040" stroke-width="1.5"/>
 <path d="M226.5 203V216M223 210H230" stroke="#f0e040" stroke-width="1.5"/>
 <path d="M534 0V212" stroke="#c8b850" stroke-width="1"/>
</svg>
<div class="t yl" style="left:340.7px;top:502px;width:16px;text-align:center;font-size:12px">-4</div>
<div class="t yl" style="left:473.6px;top:502px;width:16px;text-align:center;font-size:12px">-3</div>
<div class="t yl" style="left:608.4px;top:502px;width:16px;text-align:center;font-size:12px">-2</div>
<div class="t yl" style="left:741px;top:502px;width:16px;text-align:center;font-size:12px">-1</div>
<div class="t yl" style="left:875.8px;top:502px;width:16px;text-align:center;font-size:12px">-0</div>
<div class="t yl" style="left:893px;top:288.0px;font-size:12px;font-weight:bold;color:#cdc374">100</div>
<div class="t yl" style="left:893px;top:339.8px;font-size:12px;font-weight:bold;color:#cdc374">50</div>
<div class="t yl" style="left:893px;top:392.5px;font-size:12px;font-weight:bold;color:#cdc374">cm/s</div>
<div class="t yl" style="left:893px;top:442.8px;font-size:12px;font-weight:bold;color:#cdc374">-50</div>
<div class="t yl" style="left:893px;top:493.3px;font-size:12px;font-weight:bold;color:#cdc374">-100</div>
<svg class="a" style="left:882px;top:288px" width="10" height="214"><path d="M0 1.0H7M0 11.4H4M0 21.9H4M0 32.4H4M0 42.8H4M0 53.2H7M0 63.7H4M0 74.1H4M0 84.6H4M0 95.1H4M0 105.5H7M0 115.9H4M0 126.4H4M0 136.9H4M0 147.3H4M0 157.8H7M0 168.2H4M0 178.6H4M0 189.1H4M0 199.6H4M0 210.0H7" stroke="#c8b850" stroke-width="1.2"/></svg>

<!-- DEPTH SCALE -->
<svg class="a" style="left:840px;top:40px" width="140" height="260">
 <path d="M85 5H124.5V244H93V36.5" fill="none" stroke="#b8b8b8" stroke-width="1.3"/>
 <path d="M118 34.5H124M118 49.5H124M116 65H124M118 79H124M118 94H124M118 109H124M116 125H124M118 139H124M118 154H124M118 169H124M116 185H124M118 199H124M118 214H124M118 229H124" stroke="#b0b0b0" stroke-width="1.2"/>
 <path d="M101.6 29 L113.6 71.6 L115.8 92.5 L117.6 134.5 L116 200 L117 209.6 L124.2 242.7" fill="none" stroke="#d0d0d0" stroke-width="1.3"/>
 <path d="M119 125 L124 122 L124 130 Z" fill="#e0e030"/>
 <g fill="none" stroke="#ccd030" stroke-width="1.5" stroke-linecap="round">
  <path d="M22.9 179 C24 186 26 190 29.3 193"/>
  <path d="M69.2 179 C68 186 66 190 62.4 193"/>
  <path d="M29.3 193 L45.8 198.2 L62.4 193"/>
  <path d="M29.3 193 C29 200 29 208 28.8 214.7 C25 218 18 221 11.5 222.9"/>
  <path d="M31 214.7 C30 218 27 221 24.2 223.6"/>
  <path d="M62.4 193 C63 200 63 208 62.4 214.7 C66 218 73 221 80.2 222.9"/>
  <path d="M61 214.7 C62 218 65 221 67.4 223.6"/>
  <path d="M12.7 228.7 C22 231 33 233 43.3 235"/>
  <path d="M49.6 235 C60 233 70 231 80.2 228.7"/>
 </g>
</svg>
<div class="a" style="left:935px;top:44px;width:20px;height:12px;overflow:hidden"><div class="t yl" style="left:6px;top:-4px;font-size:13px">0</div></div>
<div class="t yl" style="left:941px;top:101px;font-size:13px">1</div>
<div class="t yl" style="left:941px;top:160px;font-size:13px">3</div>
<div class="t yl" style="left:941px;top:220px;font-size:13px">3</div>
<div class="t yl" style="left:941px;top:281px;font-size:13px">4</div>
<div class="t" style="left:852px;top:279px;font-size:12.5px;color:#c8c470;text-shadow:0 0 0.5px #c8c470">AC 60</div>

<!-- PARAMS -->
<div class="a" style="left:970.5px;top:64px;width:1.2px;height:422px;background:#6a6a6a"></div>
<div class="hdr" style="top:86px"></div>
<div class="hdr" style="top:183px"></div>
<div class="hdr" style="top:280px"></div>
<div class="t prm" style="left:976px;top:56.5px">FR</div>
<div class="t prm" style="left:976px;top:72.7px">AO%</div>
<div class="t prm" style="left:976px;top:88.0px">CHI</div>
<div class="t prm" style="left:976px;top:104.0px">Frq</div>
<div class="t prm" style="left:1020px;top:104.0px;width:42px;text-align:right">4.0</div>
<div class="t prm" style="left:976px;top:120.0px">Gn</div>
<div class="t prm" style="left:1020px;top:120.0px;width:42px;text-align:right">F </div>
<div class="t prm" style="left:976px;top:135.5px">D</div>
<div class="t prm" style="left:1020px;top:135.5px;width:42px;text-align:right">4.2</div>
<div class="t prm" style="left:976px;top:152.0px">Smart</div>
<div class="t prm" style="left:1020px;top:152.0px;width:42px;text-align:right">372</div>
<div class="t prm" style="left:976px;top:184.5px">CF</div>
<div class="t prm" style="left:976px;top:200.0px">Frq</div>
<div class="t prm" style="left:1020px;top:200.0px;width:42px;text-align:right">4.0</div>
<div class="t prm" style="left:976px;top:216.7px">Gn</div>
<div class="t prm" style="left:1020px;top:216.7px;width:42px;text-align:right">32.0</div>
<div class="t prm" style="left:976px;top:232.8px">PRF</div>
<div class="t prm" style="left:1020px;top:232.8px;width:42px;text-align:right">4.2</div>
<div class="t prm" style="left:976px;top:249.0px">WF</div>
<div class="t prm" style="left:1020px;top:249.0px;width:42px;text-align:right">372</div>
<div class="t prm" style="left:976px;top:281.5px">PW</div>
<div class="t prm" style="left:976px;top:297.6px">Frq</div>
<div class="t prm" style="left:1020px;top:297.6px;width:42px;text-align:right">5.0</div>
<div class="t prm" style="left:976px;top:313.7px">Gn</div>
<div class="t prm" style="left:1020px;top:313.7px;width:42px;text-align:right">65</div>
<div class="t prm" style="left:976px;top:329.8px">PRF</div>
<div class="t prm" style="left:1020px;top:329.8px;width:42px;text-align:right">6.6</div>
<div class="t prm" style="left:976px;top:346.0px">WF</div>
<div class="t prm" style="left:1020px;top:346.0px;width:42px;text-align:right">7</div>
<div class="t prm" style="left:976px;top:362.0px">SV</div>
<div class="t prm" style="left:1020px;top:362.0px;width:42px;text-align:right">2</div>
<div class="t prm" style="left:976px;top:378.0px">SVD</div>
<div class="t prm" style="left:1020px;top:378.0px;width:42px;text-align:right">1.9</div>

<!-- RIGHT BUTTON PANEL -->
<div class="a" style="left:1106px;top:47px;width:79px;height:617px;background:#1b1b1b"></div>
<div class="a" style="left:1120px;top:56px;width:49px;height:27.5px;border:2px solid #a0a0a0;border-radius:8px;box-shadow:inset 0 0 0 1.5px #111,0 0 0 1px #2a2a2a"></div>
<div class="t" style="left:1106px;top:94px;width:79px;text-align:center;font-size:8.5px;font-weight:bold;color:#9a9a9a">ScanAssistant</div>
<div class="a" style="left:1120px;top:120.5px;width:49px;height:27.5px;border:2px solid #a0a0a0;border-radius:8px;box-shadow:inset 0 0 0 1.5px #111,0 0 0 1px #2a2a2a"></div>
<div class="t" style="left:1106px;top:158px;width:79px;text-align:center;font-size:8.5px;font-weight:bold;color:#9a9a9a">BFlow</div>
<div class="a" style="left:1120px;top:186px;width:49px;height:27.5px;border:2px solid #a0a0a0;border-radius:8px;box-shadow:inset 0 0 0 1.5px #111,0 0 0 1px #2a2a2a"></div>
<div class="t" style="left:1106px;top:222px;width:79px;text-align:center;font-size:8.5px;font-weight:bold;color:#9a9a9a">LOGIQView</div>
<div class="a" style="left:1122.5px;top:439.5px;width:46px;height:24px;border:1.5px solid #4a4a4a;border-radius:6px"></div>
<div class="t" style="left:1123px;top:446px;width:46px;text-align:center;font-size:11px;color:#909090">P2</div>
<div class="a" style="left:1122.5px;top:535.5px;width:46px;height:24px;border:1.5px solid #4a4a4a;border-radius:6px"></div>
<div class="t" style="left:1123px;top:542px;width:46px;text-align:center;font-size:11px;color:#909090">P1</div>
<svg class="a" style="left:1134px;top:485px" width="22" height="21" viewBox="0 0 21 19" preserveAspectRatio="none"><path d="M1 1H16L20 5V18H1Z" fill="#a8a8a8"/><rect x="5" y="1" width="8" height="5" fill="#2a2a2a"/><text x="10.5" y="16" font-size="7" font-weight="bold" text-anchor="middle" fill="#2a2a2a" font-family="Liberation Sans">HD</text></svg>
<svg class="a" style="left:1134px;top:581px" width="22" height="21" viewBox="0 0 21 19" preserveAspectRatio="none"><path d="M1 1H16L20 5V18H1Z" fill="#a8a8a8"/><rect x="5" y="1" width="8" height="5" fill="#2a2a2a"/><text x="10.5" y="16" font-size="7" font-weight="bold" text-anchor="middle" fill="#2a2a2a" font-family="Liberation Sans">HD</text></svg>

<div class="a" style="left:972px;top:583px;width:59px;height:6px;background:#2a6ac8"></div>
<div class="t" style="left:1040px;top:574px;font-size:9px;font-weight:bold;color:#c0c0c0">(82.2:174.8 s)</div>

<!-- BOTTOM BAR -->
<div class="a" style="left:155px;top:596px;width:951px;height:68px;background:#1b1b1b"></div>
<div class="a" style="left:155px;top:596px;width:2px;height:68px;background:#0a0a0a"></div>
<div class="a" style="left:969px;top:596px;width:3px;height:68px;background:#0d0d0d"></div>
<div class="t btnlbl" style="left:203px;top:610px;width:60px;text-align:center">M&amp;A</div>
<div class="t btnlbl" style="left:203px;top:639px;width:60px;text-align:center">Mode</div>
<div class="sbtn" style="margin-top:0.5px;left:340px;top:629px;width:93px"></div>
<div class="t btnlbl" style="left:320px;top:612px;width:133px;text-align:center">Second Menu</div>
<div class="t num" style="left:322px;top:625px;width:10px;text-align:center">1</div>
<div class="sbtn" style="margin-top:0.5px;left:465px;top:629px;width:93px"></div>
<div class="t btnlbl" style="left:445px;top:612px;width:133px;text-align:center">Page Change</div>
<div class="t num" style="left:447px;top:625px;width:10px;text-align:center">2</div>
<div class="sbtn" style="margin-top:0.5px;left:590px;top:629px;width:92px"></div>
<div class="sbtn" style="margin-top:0.5px;left:715px;top:629px;width:93px"></div>
<div class="t btnlbl" style="left:695px;top:612px;width:133px;text-align:center">Caliper Change</div>
<div class="t num" style="left:697px;top:625px;width:10px;text-align:center">4</div>
<div class="sbtn" style="margin-top:0.5px;left:840px;top:629px;width:92px"></div>
<div class="t btnlbl" style="left:820px;top:612px;width:132px;text-align:center">Cursor Select</div>
<div class="t num" style="left:822px;top:625px;width:10px;text-align:center">5</div>

<div class="t" style="left:715px;top:635px;width:93px;text-align:center;font-size:12px;font-weight:bold;color:#e0e0e0">Velocity</div>
<div class="t num" style="left:946px;top:606px;font-size:11px">1/3</div>
<svg class="a" style="left:947px;top:645px" width="14" height="9"><path d="M2 2L7 7L12 2" fill="none" stroke="#a0a0a0" stroke-width="1.8"/></svg>
<div class="a" style="left:979px;top:639px;width:2px;height:19px;background:#080808"></div>
<div class="a" style="left:1047px;top:639px;width:2px;height:19px;background:#080808"></div>
<div class="a" style="left:1114px;top:639px;width:2px;height:19px;background:#080808"></div>
<div class="t" style="left:992px;top:644px;width:40px;text-align:center;font-size:11px;color:#8a8a8a">M&amp;A</div>
<div class="t" style="left:1061px;top:644px;width:40px;text-align:center;font-size:11px;color:#8a8a8a">Pos</div>
</body></html>
